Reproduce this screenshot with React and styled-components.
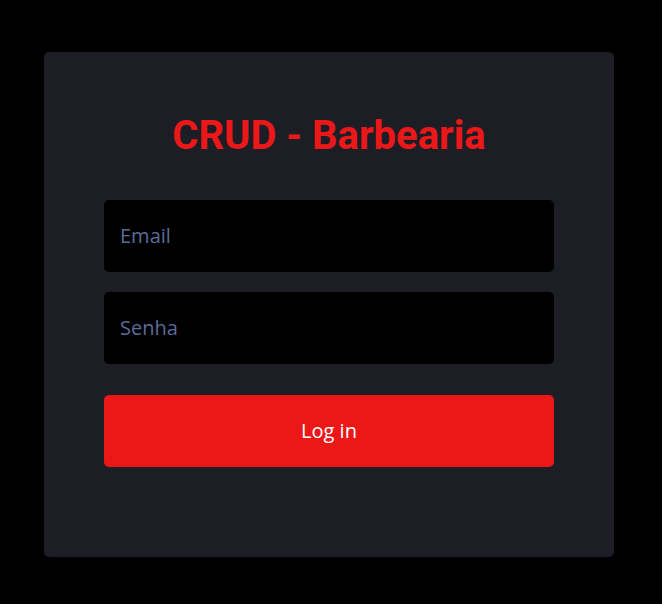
import styled, { createGlobalStyle } from "styled-components";

const GlobalStyle = createGlobalStyle`
  * {
    box-sizing: border-box;
  }
  body {
    margin: 0;
    background-color: #000;
    font-family: "Open Sans", sans-serif;
  }
`;

const Page = styled.div`
  min-height: 604px;
  padding: 52px 48px 47px 44px;
`;

const Card = styled.form`
  width: 570px;
  height: 505px;
  background-color: #1c1d25;
  border-radius: 5px;
  padding: 0 60px;
  display: flex;
  flex-direction: column;
`;

const Title = styled.h1`
  margin: 59px 0 39px;
  text-align: center;
  font-family: Roboto, sans-serif;
  font-weight: 700;
  font-size: 40px;
  line-height: 50px;
  color: #ea1818;
`;

const Input = styled.input`
  width: 100%;
  height: 72px;
  margin-bottom: ${(props) => props.gap || 20}px;
  padding: 0 16px 2px;
  border: none;
  border-radius: 5px;
  background-color: #000;
  color: #fff;
  font-family: "Open Sans", sans-serif;
  font-size: 20px;
  outline: none;
  &::placeholder {
    color: #5d6c98;
  }
`;

const Button = styled.button`
  width: 100%;
  height: 72px;
  padding: 0 0 2px;
  border: none;
  border-radius: 5px;
  background-color: #ec1818;
  color: #fff;
  font-family: "Open Sans", sans-serif;
  font-size: 20px;
  cursor: pointer;
`;

const App = () => {
  return (
    <>
      <GlobalStyle />
      <Page>
        <Card onSubmit={(e) => e.preventDefault()}>
          <Title>CRUD - Barbearia</Title>
          <Input type="email" placeholder="Email" />
          <Input type="password" placeholder="Senha" gap={31} />
          <Button type="submit">Log in</Button>
        </Card>
      </Page>
    </>
  );
};

export default App;
